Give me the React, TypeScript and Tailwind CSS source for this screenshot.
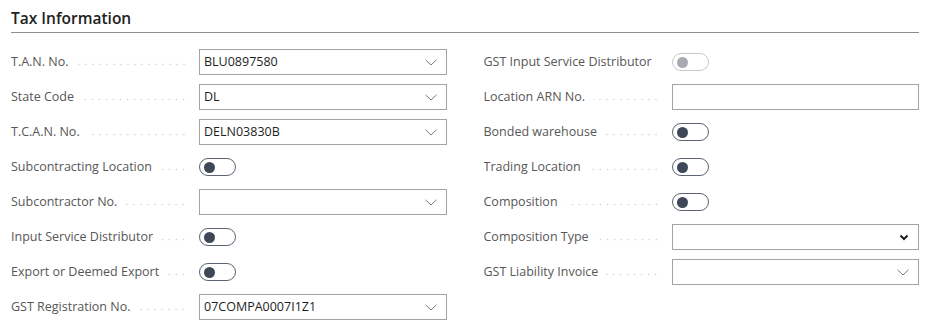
import React from "react";

type Field =
  | { label: string; kind: "select"; value?: string; bold?: boolean }
  | { label: string; kind: "text"; value?: string }
  | { label: string; kind: "toggle"; disabled?: boolean };

const left: Field[] = [
  { label: "T.A.N. No.", kind: "select", value: "BLU0897580" },
  { label: "State Code", kind: "select", value: "DL" },
  { label: "T.C.A.N. No.", kind: "select", value: "DELN03830B" },
  { label: "Subcontracting Location", kind: "toggle" },
  { label: "Subcontractor No.", kind: "select", value: "" },
  { label: "Input Service Distributor", kind: "toggle" },
  { label: "Export or Deemed Export", kind: "toggle" },
  { label: "GST Registration No.", kind: "select", value: "07COMPA0007I1Z1" },
];

const right: Field[] = [
  { label: "GST Input Service Distributor", kind: "toggle", disabled: true },
  { label: "Location ARN No.", kind: "text", value: "" },
  { label: "Bonded warehouse", kind: "toggle" },
  { label: "Trading Location", kind: "toggle" },
  { label: "Composition", kind: "toggle" },
  { label: "Composition Type", kind: "select", value: "", bold: true },
  { label: "GST Liability Invoice", kind: "select", value: "" },
];

function Chevron({ bold }: { bold?: boolean }) {
  if (bold) {
    return (
      <svg width="10" height="7" viewBox="0 0 10 7" className="shrink-0">
        <path d="M1.5 1.5 L5 5 L8.5 1.5" fill="none" stroke="#1f1f1f" strokeWidth="2" />
      </svg>
    );
  }
  return (
    <svg width="12" height="7" viewBox="0 0 12 7" className="shrink-0">
      <path d="M0.5 0.8 L6 6 L11.5 0.8" fill="none" stroke="#7a7a7a" strokeWidth="1" />
    </svg>
  );
}

function Toggle({ disabled }: { disabled?: boolean }) {
  return (
    <div
      className={
        disabled
          ? "w-[37px] h-[18px] rounded-full border-[1.5px] border-[#c8c8c8] flex items-center pl-[4px]"
          : "w-[37px] h-[18px] rounded-full border-[1.5px] border-[#5b6370] flex items-center pl-[4px]"
      }
    >
      <div
        className={
          disabled
            ? "w-[11px] h-[11px] rounded-full bg-[#a7abb1]"
            : "w-[11px] h-[11px] rounded-full bg-[#3f4858]"
        }
      />
    </div>
  );
}

function Row({ f }: { f: Field }) {
  return (
    <div className="flex items-center h-[26px]">
      <div className="w-[188px] shrink-0 flex items-center pr-[12px] overflow-hidden">
        <span className="whitespace-nowrap text-[#575757] text-[12.5px] shrink-0">{f.label}</span>
        <span className="flex-1 ml-[8px] h-[3px] mt-[4px] bg-[radial-gradient(circle,#d2d2d2_0.7px,transparent_1.1px)] bg-[length:7px_3px] bg-right" />
      </div>
      {f.kind === "toggle" ? (
        <Toggle disabled={f.disabled} />
      ) : (
        <div className="flex-1 h-[26px] border border-[#a3a3a3] flex items-center pl-[4px] pr-[9px] bg-white">
          <span className="flex-1 text-[12.5px] text-[#1e1e1e]">{f.value}</span>
          {f.kind === "select" && <Chevron bold={(f as any).bold} />}
        </div>
      )}
    </div>
  );
}

export default function App() {
  return (
    <div className="w-[932px] h-[333px] bg-white pl-[11px] pr-[13px] pt-[7px] [font-family:'Open_Sans','Noto_Sans',sans-serif]">
      <div className="border-b-[1.5px] border-[#8a8f96] pb-[3px]">
        <h1 className="text-[15.5px] font-semibold text-[#212121] leading-[22px]">Tax Information</h1>
      </div>
      <div className="grid grid-cols-2 gap-x-[37px] pt-[16px]">
        <div className="flex flex-col gap-[9px]">
          {left.map((f) => (
            <Row key={f.label} f={f} />
          ))}
        </div>
        <div className="flex flex-col gap-[9px]">
          {right.map((f) => (
            <Row key={f.label} f={f} />
          ))}
        </div>
      </div>
    </div>
  );
}
